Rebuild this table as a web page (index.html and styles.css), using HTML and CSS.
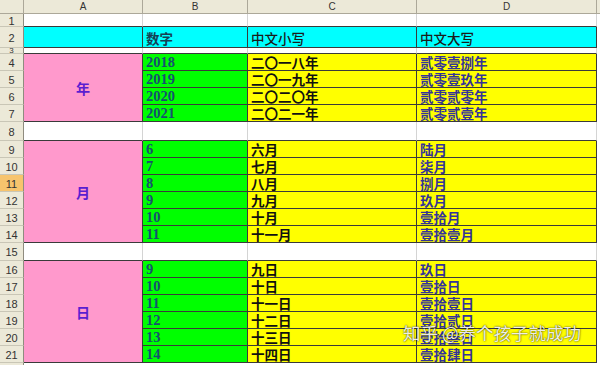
FILE: index.html
```html
<!DOCTYPE html>
<html lang="zh-CN">
<head>
<meta charset="utf-8">
<title>数字转中文</title>
<link rel="stylesheet" href="styles.css">
</head>
<body>
<div class="sheet">
  <div class="row">
    <div class="corner"></div>
    <div class="ch ca">A</div>
    <div class="ch cb">B</div>
    <div class="ch cc">C</div>
    <div class="ch cd">D</div>
    <div class="ch ce"></div>
  </div>
  <div class="row">
    <div class="rh">1</div>
    <div class="cell ca db"></div><div class="cell cb db"></div><div class="cell cc db"></div><div class="cell cd db"></div>
  </div>
  <div class="row">
    <div class="rh">2</div>
    <div class="cell ca cyan"></div>
    <div class="cell cb cyan head num-head">数字</div>
    <div class="cell cc cyan head">中文小写</div>
    <div class="cell cd cyan head">中文大写</div>
  </div>
  <div class="row">
    <div class="rh tiny">3</div>
    <div class="cell ca db"></div><div class="cell cb db"></div><div class="cell cc db"></div><div class="cell cd db"></div>
  </div>

  <div class="row">
    <div class="rh">4</div>
    <div class="cell ca pink span4"><span class="label">年</span></div>
    <div class="cell cb green num">2018</div><div class="cell cc yellow low">二〇一八年</div><div class="cell cd yellow up">贰零壹捌年</div>
  </div>
  <div class="row">
    <div class="rh">5</div>
    <div class="cell cb green num">2019</div><div class="cell cc yellow low">二〇一九年</div><div class="cell cd yellow up">贰零壹玖年</div>
  </div>
  <div class="row">
    <div class="rh">6</div>
    <div class="cell cb green num">2020</div><div class="cell cc yellow low">二〇二〇年</div><div class="cell cd yellow up">贰零贰零年</div>
  </div>
  <div class="row">
    <div class="rh">7</div>
    <div class="cell cb green num">2021</div><div class="cell cc yellow low">二〇二一年</div><div class="cell cd yellow up">贰零贰壹年</div>
  </div>
  <div class="row">
    <div class="rh">8</div>
    <div class="cell ca db"></div><div class="cell cb db"></div><div class="cell cc db"></div><div class="cell cd db"></div>
  </div>

  <div class="row">
    <div class="rh">9</div>
    <div class="cell ca pink span6"><span class="label">月</span></div>
    <div class="cell cb green num">6</div><div class="cell cc yellow low">六月</div><div class="cell cd yellow up">陆月</div>
  </div>
  <div class="row">
    <div class="rh">10</div>
    <div class="cell cb green num">7</div><div class="cell cc yellow low">七月</div><div class="cell cd yellow up">柒月</div>
  </div>
  <div class="row">
    <div class="rh active">11</div>
    <div class="cell cb green num">8</div><div class="cell cc yellow low">八月</div><div class="cell cd yellow up">捌月</div>
  </div>
  <div class="row">
    <div class="rh">12</div>
    <div class="cell cb green num">9</div><div class="cell cc yellow low">九月</div><div class="cell cd yellow up">玖月</div>
  </div>
  <div class="row">
    <div class="rh">13</div>
    <div class="cell cb green num">10</div><div class="cell cc yellow low">十月</div><div class="cell cd yellow up">壹拾月</div>
  </div>
  <div class="row">
    <div class="rh">14</div>
    <div class="cell cb green num">11</div><div class="cell cc yellow low">十一月</div><div class="cell cd yellow up">壹拾壹月</div>
  </div>
  <div class="row">
    <div class="rh">15</div>
    <div class="cell ca db"></div><div class="cell cb db"></div><div class="cell cc db"></div><div class="cell cd db"></div>
  </div>

  <div class="row">
    <div class="rh">16</div>
    <div class="cell ca pink span6"><span class="label">日</span></div>
    <div class="cell cb green num">9</div><div class="cell cc yellow low">九日</div><div class="cell cd yellow up">玖日</div>
  </div>
  <div class="row">
    <div class="rh">17</div>
    <div class="cell cb green num">10</div><div class="cell cc yellow low">十日</div><div class="cell cd yellow up">壹拾日</div>
  </div>
  <div class="row">
    <div class="rh">18</div>
    <div class="cell cb green num">11</div><div class="cell cc yellow low">十一日</div><div class="cell cd yellow up">壹拾壹日</div>
  </div>
  <div class="row">
    <div class="rh">19</div>
    <div class="cell cb green num">12</div><div class="cell cc yellow low">十二日</div><div class="cell cd yellow up">壹拾贰日</div>
  </div>
  <div class="row">
    <div class="rh">20</div>
    <div class="cell cb green num">13</div><div class="cell cc yellow low">十三日</div><div class="cell cd yellow up">壹拾叁日</div>
  </div>
  <div class="row">
    <div class="rh">21</div>
    <div class="cell cb green num">14</div><div class="cell cc yellow low">十四日</div><div class="cell cd yellow up">壹拾肆日</div>
  </div>
  <div class="row">
    <div class="rh"></div>
  </div>
</div>
<div class="wm">知乎 @养个孩子就成功</div>
</body>
</html>
```

FILE: styles.css
```css
html, body {
  margin: 0;
  padding: 0;
  background: #ffffff;
}
body {
  position: relative;
  width: 600px;
  height: 365px;
  overflow: hidden;
}
.sheet {
  display: grid;
  grid-template-columns: 24px 119px 105px 169px 180px 3px;
  grid-template-rows: 14px 13px 21px 6px repeat(4, 17px) 19px repeat(6, 17px) 18px repeat(6, 17px) 20px;
  width: 600px;
}
.row { display: contents; }

.corner, .ch, .rh {
  box-sizing: border-box;
  background: #ece9d8;
  color: #333333;
  font-family: "Liberation Sans", Arial, sans-serif;
  display: flex;
  align-items: center;
  justify-content: center;
  overflow: hidden;
}
.corner {
  grid-column: 1;
  border-right: 1px solid #aca899;
  border-bottom: 1px solid #aca899;
}
.ch {
  font-size: 10px;
  line-height: 12px;
  border-right: 1px solid #aca899;
  border-bottom: 1px solid #aca899;
}
.ce { border-right: 0; }
.rh {
  grid-column: 1;
  font-size: 11px;
  line-height: 12px;
  border-right: 1px solid #8f8c7f;
  border-bottom: 1px solid #c9c6b6;
  padding-top: 1px;
}
.rh.tiny {
  font-size: 8px;
  line-height: 5px;
  padding-top: 0;
}
.rh.active { background: #f7c46d; }

.cell {
  box-sizing: border-box;
  border-right: 1px solid #d4d4d4;
  border-bottom: 1px solid #d4d4d4;
  overflow: hidden;
  white-space: nowrap;
  display: flex;
  align-items: flex-end;
  padding: 0 0 0 3px;
  font-family: "Noto Sans CJK SC", "Liberation Serif", serif;
  font-size: 13.5px;
  line-height: 16px;
  font-weight: 700;
  background: #ffffff;
}
.ca { grid-column: 2; }
.cb { grid-column: 3; }
.cc { grid-column: 4; }
.cd { grid-column: 5; }

.db { border-bottom-color: #3a3a3a; }

.cyan, .pink, .green, .yellow {
  border-right-color: #3a3a3a;
  border-bottom-color: #3a3a3a;
}
.cyan { background: #00ffff; }
.pink { background: #ff99cc; }
.green { background: #00ff00; }
.yellow { background: #ffff00; }

.span4 { grid-row: span 4; }
.span6 { grid-row: span 6; }

.pink {
  align-items: center;
  justify-content: center;
  padding: 0;
}
.label {
  color: #5a1ed0;
  font-size: 14px;
}

.head {
  color: #1b1b1b;
  font-weight: 500;
  font-size: 13.5px;
  padding-bottom: 1px;
}
.num-head {
  color: #163f55;
  font-weight: 700;
}

.num {
  font-family: "Liberation Serif", "Times New Roman", serif;
  font-size: 14.5px;
  color: #17506f;
}
.low { color: #111111; }
.up { color: #333399; }

.wm {
  position: absolute;
  left: 403px;
  top: 322px;
  font-family: "Noto Sans CJK SC", sans-serif;
  font-size: 17.5px;
  line-height: 22px;
  color: rgba(255, 255, 255, 0.92);
  text-shadow: 0 0 2px rgba(0, 0, 0, 0.6), 0 0 1px rgba(0, 0, 0, 0.5);
  white-space: nowrap;
}
```
